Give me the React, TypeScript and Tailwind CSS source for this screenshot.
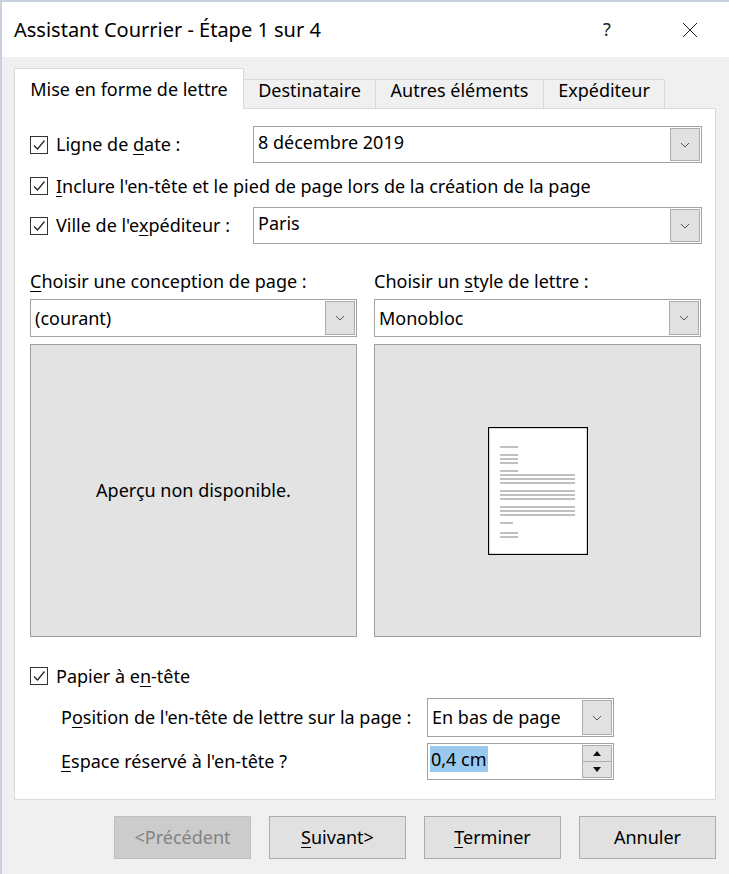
import React from "react";

const font = { fontFamily: '"Noto Sans", "Liberation Sans", sans-serif' };

function Check() {
  return (
    <span className="flex h-[18px] w-[18px] shrink-0 items-center justify-center border border-[#333] bg-white">
      <svg width="14" height="14" viewBox="0 0 14 14">
        <path d="M2 7.5 L5.5 11 L12.5 2.5" fill="none" stroke="#222" strokeWidth="1.2" />
      </svg>
    </span>
  );
}

function Chevron() {
  return (
    <svg width="10" height="6" viewBox="0 0 10 6">
      <path d="M1 1 L5 5 L9 1" fill="none" stroke="#555" strokeWidth="1" />
    </svg>
  );
}

function Combo({ value, className, up = false }: { value: string; className: string; up?: boolean }) {
  return (
    <div className={`flex items-stretch border border-[#a3a3a3] bg-white ${className}`}>
      <div className={`flex flex-1 items-center pl-[4px] ${up ? "pb-[4px]" : ""}`}>{value}</div>
      <div className="m-[1px] flex w-[30px] items-center justify-center border border-[#adadad] bg-[#e1e1e1]">
        <Chevron />
      </div>
    </div>
  );
}

function U({ children }: { children: React.ReactNode }) {
  return <span className="underline underline-offset-[3px] decoration-1">{children}</span>;
}

function PageThumb() {
  const rows: [number, number][] = [
    [19, 18], [27, 18], [31, 18], [35, 18], [43, 18], [47, 75], [51, 75], [55, 75],
    [63, 75], [67, 75], [71, 75], [79, 75], [83, 75], [87, 75], [95, 13], [105, 18], [109, 18],
  ];
  return (
    <svg width="100" height="128" viewBox="0 0 100 128">
      <rect x="0.5" y="0.5" width="99" height="127" fill="#fff" stroke="#000" strokeWidth="1.3" />
      {rows.map(([y, w], i) => (
        <rect key={i} x="12" y={y} width={w} height="2" fill="#c0c0c0" />
      ))}
    </svg>
  );
}

export default function App() {
  return (
    <div style={font} className="h-[874px] w-[729px] overflow-hidden border-t-2 border-l-2 border-[#c9d1de] bg-[#f0f0f0] text-[18px] text-black">
      {/* title bar */}
      <div className="flex h-[55px] items-center bg-white pl-[12px]">
        <div className="flex-1 text-[20px]">Assistant Courrier - Étape 1 sur 4</div>
        <div className="w-[30px] text-center text-[18px] text-[#222]">?</div>
        <div className="ml-[60px] mr-[31px] flex h-[16px] w-[16px] items-center justify-center">
          <svg width="16" height="16" viewBox="0 0 16 16">
            <path d="M1 1 L15 15 M15 1 L1 15" stroke="#222" strokeWidth="1" />
          </svg>
        </div>
      </div>

      <div className="px-[12px] pt-[11px]">
        {/* tabs */}
        <div className="flex h-[40px] items-end">
          <div className="relative z-10 -mb-px flex h-[41px] w-[230px] items-center justify-center border border-b-0 border-[#d9d9d9] bg-white">
            Mise en forme de lettre
          </div>
          <div className="flex h-[29px] w-[132px] items-center justify-center border border-l-0 border-b-0 border-[#d9d9d9] pb-[7px]">Destinataire</div>
          <div className="flex h-[29px] w-[168px] items-center justify-center border border-l-0 border-b-0 border-[#d9d9d9] pb-[7px]">Autres éléments</div>
          <div className="flex h-[29px] w-[121px] items-center justify-center border border-l-0 border-b-0 border-[#d9d9d9] pb-[7px]">Expéditeur</div>
        </div>

        {/* panel */}
        <div className="flex h-[692px] w-[702px] flex-col border border-[#d9d9d9] bg-white pl-[15px] pr-[13px]">
          <div className="mt-[17px] flex h-[37px] items-center">
            <Check />
            <span className="ml-[8px] w-[197px]">Ligne de <U>d</U>ate :</span>
            <Combo value="8 décembre 2019" className="h-[37px] flex-1" up />
          </div>
          <div className="mt-[5px] flex h-[36px] items-center">
            <Check />
            <span className="ml-[8px]"><U>I</U>nclure l'en-tête et le pied de page lors de la création de la page</span>
          </div>
          <div className="mt-[3px] flex h-[37px] items-center">
            <Check />
            <span className="ml-[8px] w-[197px]">Ville de l'e<U>x</U>péditeur :</span>
            <Combo value="Paris" className="h-[37px] flex-1" up />
          </div>

          <div className="mt-[26px] flex gap-[17px]">
            <div className="flex w-[327px] flex-col">
              <div className="h-[22px] leading-[22px]"><U>C</U>hoisir une conception de page :</div>
              <Combo value="(courant)" className="mt-[7px] h-[38px]" />
              <div className="mt-[7px] flex h-[293px] items-center justify-center border border-[#a0a0a0] bg-[#e3e3e3]">
                Aperçu non disponible.
              </div>
            </div>
            <div className="flex w-[327px] flex-col">
              <div className="h-[22px] leading-[22px]">Choisir un <U>s</U>tyle de lettre :</div>
              <Combo value="Monobloc" className="mt-[7px] h-[38px]" />
              <div className="mt-[7px] flex h-[293px] items-center justify-center border border-[#a0a0a0] bg-[#e3e3e3]">
                <PageThumb />
              </div>
            </div>
          </div>

          <div className="mt-[28px] flex h-[22px] items-center">
            <Check />
            <span className="ml-[8px]">Papier à e<U>n</U>-tête</span>
          </div>

          <div className="mt-[11px] flex h-[39px] items-center pl-[31px]">
            <span className="w-[366px]">P<U>o</U>sition de l'en-tête de lettre sur la page :</span>
            <Combo value="En bas de page" className="h-[39px] w-[187px]" />
          </div>
          <div className="mt-[6px] flex h-[37px] items-center pl-[31px]">
            <span className="w-[366px]"><U>E</U>space réservé à l'en-tête ?</span>
            <div className="flex h-[37px] w-[187px] items-stretch border border-[#a3a3a3] bg-white">
              <div className="flex-1 pl-[2px] pt-[2px]">
                <span className="inline-block bg-[#99c9ef] px-[1px] leading-[26px]">0,4 cm</span>
              </div>
              <div className="m-[1px] flex w-[30px] flex-col">
                <div className="flex flex-1 items-center justify-center border border-[#adadad] bg-[#e1e1e1]">
                  <svg width="8" height="5" viewBox="0 0 8 5"><path d="M0 5 L4 0 L8 5 Z" fill="#111" /></svg>
                </div>
                <div className="flex flex-1 items-center justify-center border border-t-0 border-[#adadad] bg-[#e1e1e1]">
                  <svg width="8" height="5" viewBox="0 0 8 5"><path d="M0 0 L4 5 L8 0 Z" fill="#111" /></svg>
                </div>
              </div>
            </div>
          </div>
        </div>

        {/* buttons */}
        <div className="mt-[16px] flex justify-end gap-[18px] pr-[1px]">
          <div className="flex h-[43px] w-[137px] items-center justify-center border border-[#bfbfbf] bg-[#cccccc] text-[#838383]">&lt;Précédent</div>
          <div className="flex h-[43px] w-[137px] items-center justify-center border border-[#adadad] bg-[#e1e1e1]"><span><U>S</U>uivant&gt;</span></div>
          <div className="flex h-[43px] w-[137px] items-center justify-center border border-[#adadad] bg-[#e1e1e1]"><span><U>T</U>erminer</span></div>
          <div className="flex h-[43px] w-[137px] items-center justify-center border border-[#adadad] bg-[#e1e1e1]">Annuler</div>
        </div>
      </div>
    </div>
  );
}
